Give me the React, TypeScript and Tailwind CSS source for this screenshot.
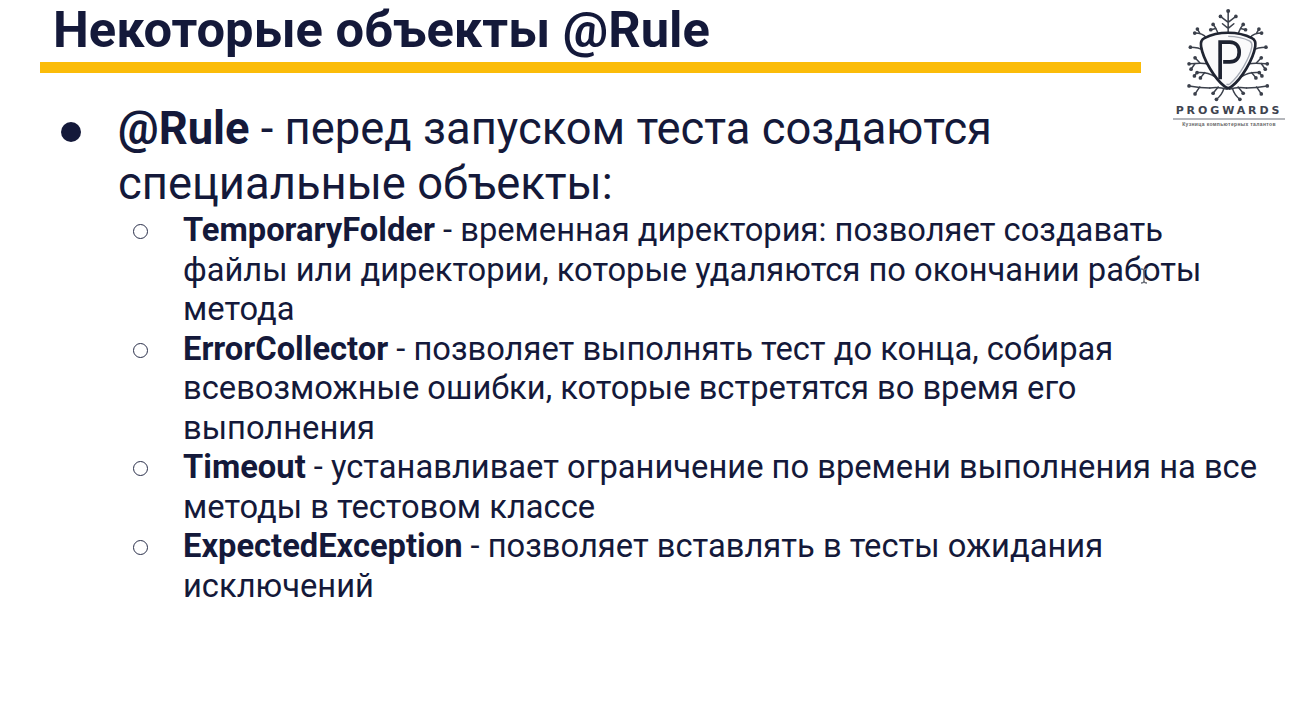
const items = [
  {
    name: 'TemporaryFolder',
    lines: ['временная директория: позволяет создавать', 'файлы или директории, которые удаляются по окончании работы', 'метода'],
  },
  {
    name: 'ErrorCollector',
    lines: ['позволяет выполнять тест до конца, собирая', 'всевозможные ошибки, которые встретятся во время его', 'выполнения'],
  },
  {
    name: 'Timeout',
    lines: ['устанавливает ограничение по времени выполнения на все', 'методы в тестовом классе'],
  },
  {
    name: 'ExpectedException',
    lines: ['позволяет вставлять в тесты ожидания', 'исключений'],
  },
]

// left half of the tree, mirrored around x=235 for the right side
const twigs = [
  'M205 100 C200 88 198 80 190 72',
  'M198 84 L183 88',
  'M170 112 C160 100 150 98 135 98',
  'M150 98 L143 86',
  'M162 150 C150 142 140 140 122 140',
  'M172 190 C158 186 140 188 118 190',
  'M150 187 L136 172',
  'M136 189 L124 206',
  'M195 228 C180 218 165 214 142 216',
  'M165 216 L152 232',
  'M142 216 L134 226',
  'M232 266 C220 262 205 258 180 262',
  'M205 259 L190 278',
  'M180 262 C160 262 140 260 118 256',
  'M150 259 L136 280',
  'M222 264 C218 278 210 288 200 296',
]
const tips = [
  [190, 72], [183, 88], [135, 98], [143, 86], [122, 140], [118, 190], [136, 172], [124, 206],
  [142, 216], [152, 232], [134, 226], [190, 278], [118, 256], [136, 280], [200, 296],
]

function Logo() {
  return (
    <div className="absolute left-[1173px] top-[7px] flex w-[112px] flex-col items-center">
      <svg viewBox="70 20 335 290" fill="none" className="h-[97px] w-[112px]">
        <g stroke="#3b404b" strokeWidth="4.5" strokeLinecap="round">
          {twigs.map((d) => (
            <path key={d} d={d} />
          ))}
          {twigs.map((d) => (
            <path key={d + 'r'} d={d} transform="matrix(-1 0 0 1 470 0)" />
          ))}
          <path d="M235 98 V34 M235 66 L212 48 M235 66 L258 48 M235 84 L218 70 M235 84 L252 70" />
        </g>
        <g fill="#3b404b">
          {tips.map(([x, y]) => (
            <circle key={`${x}-${y}`} cx={x} cy={y} r="5.5" />
          ))}
          {tips.map(([x, y]) => (
            <circle key={`r${x}-${y}`} cx={470 - x} cy={y} r="5.5" />
          ))}
          <circle cx="235" cy="32" r="6" />
          <circle cx="212" cy="48" r="5.5" />
          <circle cx="258" cy="48" r="5.5" />
        </g>
        <path
          d="M235 97 C262 97 285 102 306 113 C316 118 318 126 316 138 C310 176 275 236 245 258 C238 264 232 264 225 258 C195 236 160 176 154 138 C152 126 154 118 164 113 C185 102 208 97 235 97 Z"
          fill="#fafafb"
          stroke="#1f2431"
          strokeWidth="8"
          strokeLinejoin="round"
        />
        <path
          d="M235 108 C258 108 280 112 300 122 C306 126 307 130 306 138 C300 172 268 228 240 250 C236 253 234 253 230 250"
          fill="none"
          stroke="#a6abb5"
          strokeWidth="4"
        />
        <path d="M211 236 V125 H240 C258 125 268 138 268 155 C268 172 258 184 240 184 H220" fill="none" stroke="#1d2230" strokeWidth="11" />
      </svg>
      <span className="mt-[1px] whitespace-nowrap font-['DejaVu_Sans',sans-serif] text-[11px] font-bold leading-[11px] tracking-[2.9px] text-[#3f444f]">
        PROGWARDS
      </span>
      <div className="mt-[2px] h-[2px] w-full bg-[#b4b6bb]" />
      <span className="mt-[1px] whitespace-nowrap font-['Liberation_Sans',sans-serif] text-[5px] font-bold leading-[6px] tracking-[0.35px] text-[#666]">
        Кузница компьютерных талантов
      </span>
    </div>
  )
}

export default function App() {
  return (
    <div className="relative h-[715px] w-[1300px] overflow-hidden bg-white font-['Roboto',sans-serif] text-[#14193a]">
      <header className="pl-[40px]">
        <h1 className="pb-[2px] pl-[13px] text-[50.7px] font-bold leading-[60px]">Некоторые объекты @Rule</h1>
        <div className="h-[11px] w-[1101px] bg-[#fbbc09]" />
      </header>
      <Logo />
      <main className="pl-[61px] pt-[28px]">
        <div className="flex">
          <span className="mt-[21px] h-[20px] w-[20px] shrink-0 rounded-full bg-[#14193a]" />
          <p className="ml-[37px] text-[45.35px] leading-[55px]">
            <b className="font-bold">@Rule</b> - перед запуском теста создаются
            <br />
            специальные объекты:
          </p>
        </div>
        <ul className="ml-[72px]">
          {items.map((item) => (
            <li key={item.name} className="flex">
              <span className="mt-[13px] h-[15px] w-[15px] shrink-0 rounded-full border-[1.5px] border-[#2a2f4a]" />
              <p className="ml-[35px] whitespace-nowrap text-[32.7px] leading-[39.5px]">
                {item.lines.map((line, i) => (
                  <span key={line} className="block">
                    {i === 0 && <b className="font-bold">{item.name}</b>}
                    {i === 0 && ' - '}
                    {line}
                  </span>
                ))}
              </p>
            </li>
          ))}
        </ul>
      </main>
      {/* mouse cursor left in the recording */}
      <svg width="10" height="16" viewBox="0 0 10 16" className="absolute left-[1139px] top-[268px]" fill="none" stroke="#6b6f78" strokeWidth="1.4">
        <path d="M2 1 C4 1 5 2 5 3 V13 C5 14 4 15 2 15 M8 1 C6 1 5 2 5 3 M5 13 C5 14 6 15 8 15" />
      </svg>
    </div>
  )
}
